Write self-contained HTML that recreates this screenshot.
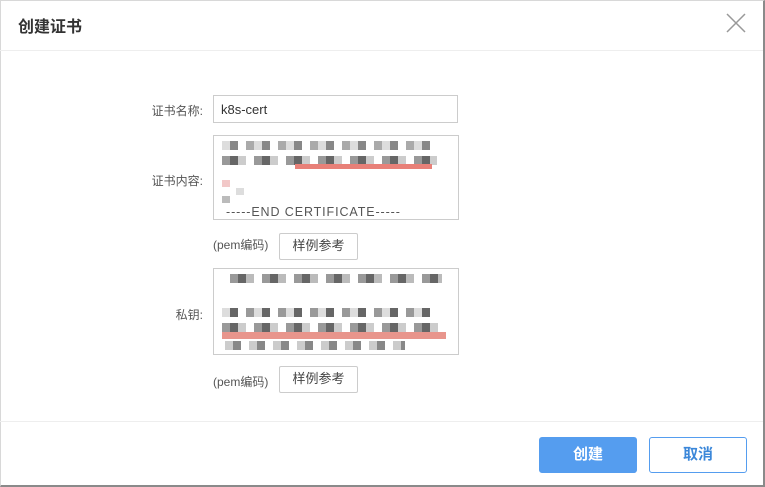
<!DOCTYPE html><html><head><meta charset="utf-8"><style>
*{margin:0;padding:0;box-sizing:border-box}
body{width:765px;height:487px;background:#fff;font-family:"Liberation Sans","Noto Sans CJK SC",sans-serif;position:relative;overflow:hidden;color:#333}
.frame{position:absolute;left:0;top:0;width:765px;height:487px;border:1px solid #d8d8d8;border-right:2px solid #8a8a8a;border-bottom:2px solid #8a8a8a}
.a{position:absolute}
.lbl{font-size:12px;color:#555;text-align:right;width:80px}
.box{border:1px solid #ccc;background:#fff}
.btn{border:1px solid #ccc;border-radius:2px;font-size:13px;text-align:center;line-height:24px;color:#444}
</style></head><body>
<div class="frame"></div>
<div class="a" style="left:18px;top:13px;font-size:16px;font-weight:bold;color:#333">创建证书</div>
<svg class="a" style="left:726px;top:13px" width="20" height="20"><path d="M1 1L19 19M19 1L1 19" stroke="#999" stroke-width="1.5"/></svg>
<div class="a" style="left:0;top:50px;width:763px;height:1px;background:#eee"></div>
<div class="a lbl" style="left:123px;top:102px">证书名称:</div>
<div class="a box" style="left:213px;top:95px;width:245px;height:28px;font-size:13px;padding:6px 7px">k8s-cert</div>
<div class="a lbl" style="left:123px;top:172px">证书内容:</div>
<div class="a box" style="left:213px;top:135px;width:246px;height:85px"></div>
<div class="a" style="left:222px;top:141px;width:215px;height:9px;background:repeating-linear-gradient(90deg,#ddd 0 8px,#888 8px 16px,#fff 16px 24px,#aaa 24px 32px)"></div>
<div class="a" style="left:222px;top:156px;width:215px;height:9px;background:repeating-linear-gradient(90deg,#999 0 8px,#666 8px 16px,#ccc 16px 24px,#fff 24px 32px)"></div>
<div class="a" style="left:295px;top:164px;width:137px;height:5px;background:#e88078"></div>
<div class="a" style="left:222px;top:180px;width:8px;height:7px;background:#f2c8c8"></div>
<div class="a" style="left:236px;top:188px;width:8px;height:7px;background:#ddd"></div>
<div class="a" style="left:222px;top:196px;width:8px;height:7px;background:#bbb"></div>
<div class="a" style="left:226px;top:205px;font-size:12.5px;letter-spacing:0.9px;color:#555">-----END CERTIFICATE-----</div>
<div class="a" style="left:213px;top:236px;font-size:12px;color:#555">(pem编码)</div>
<div class="a btn" style="left:279px;top:233px;width:79px;height:27px">样例参考</div>
<div class="a lbl" style="left:123px;top:306px">私钥:</div>
<div class="a box" style="left:213px;top:268px;width:246px;height:87px"></div>
<div class="a" style="left:222px;top:274px;width:220px;height:9px;background:repeating-linear-gradient(90deg,#fff 0 8px,#999 8px 16px,#666 16px 24px,#bbb 24px 32px)"></div>
<div class="a" style="left:222px;top:308px;width:210px;height:9px;background:repeating-linear-gradient(90deg,#ddd 0 8px,#666 8px 16px,#fff 16px 24px,#999 24px 32px)"></div>
<div class="a" style="left:222px;top:323px;width:220px;height:9px;background:repeating-linear-gradient(90deg,#999 0 8px,#666 8px 16px,#ccc 16px 24px,#fff 24px 32px)"></div>
<div class="a" style="left:222px;top:332px;width:224px;height:7px;background:#e8958c"></div>
<div class="a" style="left:225px;top:341px;width:180px;height:9px;background:repeating-linear-gradient(90deg,#ccc 0 8px,#888 8px 16px,#fff 16px 24px)"></div>
<div class="a" style="left:213px;top:373px;font-size:12px;color:#555">(pem编码)</div>
<div class="a btn" style="left:279px;top:366px;width:79px;height:27px">样例参考</div>
<div class="a" style="left:0;top:421px;width:763px;height:1px;background:#eee"></div>
<div class="a" style="left:539px;top:437px;width:98px;height:36px;background:#559def;border-radius:3px;color:#fff;font-size:15px;font-weight:bold;text-align:center;line-height:36px">创建</div>
<div class="a" style="left:649px;top:437px;width:98px;height:36px;border:1px solid #559def;border-radius:3px;color:#3b87d9;font-size:15px;font-weight:bold;text-align:center;line-height:34px">取消</div>
</body></html>
